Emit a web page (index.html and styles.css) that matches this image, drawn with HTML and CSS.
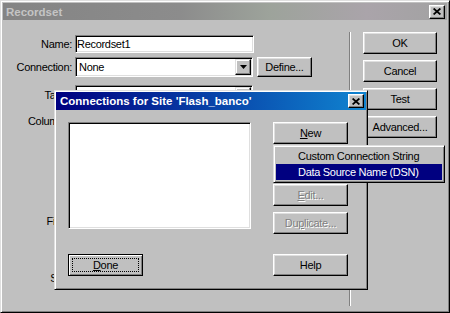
FILE: index.html
```html
<!DOCTYPE html>
<html>

<head>
    <meta charset="UTF-8">
    <meta name="viewport" content="width=device-width, initial-scale=1.0">
    <title>Recordset</title>
    <link rel="stylesheet" href="styles.css">
</head>

<body>
    <div class="window">
        <div class="titlebar inactive">
            <span class="caption">Recordset</span>
            <span class="close-btn">
                <svg width="8" height="7" viewBox="0 0 8 7"><path d="M0.6 0.5 L7.4 6.5 M7.4 0.5 L0.6 6.5" stroke="#000" stroke-width="1.7" fill="none"/></svg>
            </span>
        </div>
        <div class="window-body">
            <div class="form">
                <div class="row row-name">
                    <label>Name:</label>
                    <div class="textbox">Recordset1</div>
                </div>
                <div class="row row-conn">
                    <label>Connection:</label>
                    <div class="select">
                        <span class="select-value">None</span>
                        <span class="select-arrow"><svg width="7" height="4" viewBox="0 0 7 4"><path d="M0 0h7L3.5 4z"/></svg></span>
                    </div>
                    <button class="btn btn-define">Define...</button>
                </div>
                <div class="row row-table">
                    <label>Table:</label>
                    <div class="select">
                        <span class="select-value"></span>
                        <span class="select-arrow"><svg width="7" height="4" viewBox="0 0 7 4"><path d="M0 0h7L3.5 4z"/></svg></span>
                    </div>
                </div>
                <div class="row row-columns">
                    <label>Columns:</label>
                    <div class="columns-box">
                        <div class="radio-line"><span class="radio checked"></span>All</div>
                        <div class="radio-line"><span class="radio"></span>Selected:</div>
                        <div class="listbox small"></div>
                    </div>
                </div>
                <div class="row row-filter">
                    <label>Filter:</label>
                    <div class="select short"><span class="select-value">None</span><span class="select-arrow"><svg width="7" height="4" viewBox="0 0 7 4"><path d="M0 0h7L3.5 4z"/></svg></span></div>
                    <div class="select short"><span class="select-value">=</span><span class="select-arrow"><svg width="7" height="4" viewBox="0 0 7 4"><path d="M0 0h7L3.5 4z"/></svg></span></div>
                </div>
                <div class="row row-param">
                    <label></label>
                    <div class="select short"><span class="select-value">URL Parameter</span><span class="select-arrow"><svg width="7" height="4" viewBox="0 0 7 4"><path d="M0 0h7L3.5 4z"/></svg></span></div>
                    <div class="textbox short"></div>
                </div>
                <div class="row row-sort">
                    <label>Sort:</label>
                    <div class="select short"><span class="select-value">None</span><span class="select-arrow"><svg width="7" height="4" viewBox="0 0 7 4"><path d="M0 0h7L3.5 4z"/></svg></span></div>
                    <div class="select short"><span class="select-value">Ascending</span><span class="select-arrow"><svg width="7" height="4" viewBox="0 0 7 4"><path d="M0 0h7L3.5 4z"/></svg></span></div>
                </div>
            </div>
            <div class="separator"></div>
            <div class="side-buttons">
                <button class="btn">OK</button>
                <button class="btn">Cancel</button>
                <button class="btn">Test</button>
                <button class="btn">Advanced...</button>
            </div>
        </div>

        <!-- connections dialog opened over the recordset window -->
        <div class="dialog">
            <div class="titlebar active">
                <span class="caption">Connections for Site 'Flash_banco'</span>
                <span class="close-btn">
                    <svg width="8" height="7" viewBox="0 0 8 7"><path d="M0.6 0.5 L7.4 6.5 M7.4 0.5 L0.6 6.5" stroke="#000" stroke-width="1.7" fill="none"/></svg>
                </span>
            </div>
            <div class="dialog-body">
                <div class="dialog-left">
                    <div class="listbox"></div>
                    <button class="btn btn-wide default"><span class="focus-ring"><u>D</u>one</span></button>
                </div>
                <div class="dialog-right">
                    <button class="btn btn-wide"><u>N</u>ew</button>
                    <button class="btn btn-wide btn-edit" disabled><u>E</u>dit...</button>
                    <button class="btn btn-wide btn-dup" disabled>Du<u>p</u>licate...</button>
                    <button class="btn btn-wide btn-help">Help</button>
                </div>
            </div>
        </div>

        <!-- menu of the New button -->
        <div class="popup-menu">
            <div class="menu-item">Custom Connection String</div>
            <div class="menu-item selected">Data Source Name (DSN)</div>
        </div>
    </div>
</body>

</html>
```

FILE: styles.css
```css
body {
    margin: 0;
    font-family: "Liberation Sans", Arial, sans-serif;
    font-size: 11px;
    letter-spacing: -0.3px;
    color: #000;
    background: #c0c0c0;
}

/* window frame */
.window {
    position: relative;
    width: 450px;
    height: 313px;
    box-sizing: border-box;
    padding: 2px;
    background: #c0c0c0;
    border: 1px solid;
    border-color: #dfdfdf #000 #000 #dfdfdf;
    box-shadow: inset 1px 1px #fff, inset -1px -1px #808080;
    display: flex;
    flex-direction: column;
}

.titlebar {
    display: flex;
    align-items: center;
    justify-content: space-between;
    height: 17px;
    padding: 0 2px 0 3px;
    font-weight: bold;
    font-size: 11.5px;
    letter-spacing: 0;
    flex-shrink: 0;
}

.titlebar.inactive {
    background: linear-gradient(90deg, #848484, #8c8c8c 40%, #9da39b 60%, #aaa4aa 82%, #a2a2a2);
    color: #c4c4c4;
}

.titlebar.active {
    height: 18px;
    padding-left: 4px;
    background: linear-gradient(90deg, #000080, #1084d0);
    color: #fff;
}

.close-btn {
    width: 16px;
    height: 14px;
    box-sizing: border-box;
    background: #c0c0c0;
    border: 1px solid;
    border-color: #fff #000 #000 #fff;
    box-shadow: inset -1px -1px #808080, inset 1px 1px #dfdfdf;
    display: flex;
    align-items: center;
    justify-content: center;
}

.window-body {
    flex: 1;
    display: flex;
    padding: 12px 10px 4px 0;
}

/* form on the left */
.form {
    width: 346px;
    flex-shrink: 0;
    padding-top: 3px;
}

.row {
    display: flex;
    align-items: center;
}

.row label {
    width: 69px;
    margin-right: 3px;
    text-align: right;
    flex-shrink: 0;
}

.row-name {
    height: 18px;
}

.row-conn {
    height: 20px;
    margin-top: 4px;
}

.row-table {
    height: 20px;
    margin-top: 8px;
}

.row-columns {
    height: 92px;
    margin-top: 7px;
    align-items: flex-start;
}

.row-columns label {
    line-height: 18px;
}

.row-filter {
    height: 18px;
    margin-top: 8px;
}

.row-param {
    height: 18px;
    margin-top: 6px;
}

.row-sort {
    height: 18px;
    margin-top: 15px;
}

.row-filter .select,
.row-param .select,
.row-sort .select,
.row-param .textbox {
    height: 18px;
    margin-right: 4px;
}

.textbox {
    width: 179px;
    height: 18px;
    box-sizing: border-box;
    padding: 1px 1px 1px 1px;
    line-height: 14px;
    background: #fff;
    border: 1px solid;
    border-color: #808080 #fff #fff #808080;
    box-shadow: inset 1px 1px #000, inset -1px -1px #dfdfdf;
}

.select {
    display: flex;
    width: 178px;
    height: 20px;
    box-sizing: border-box;
    padding: 1px;
    background: #fff;
    border: 1px solid;
    border-color: #808080 #fff #fff #808080;
    box-shadow: inset 1px 1px #000, inset -1px -1px #dfdfdf;
}

.select.short,
.textbox.short {
    width: 120px;
}

.select-value {
    flex: 1;
    padding-left: 2px;
    line-height: 16px;
    white-space: nowrap;
    overflow: hidden;
}

.select-arrow {
    width: 16px;
    height: 100%;
    box-sizing: border-box;
    background: #c0c0c0;
    border: 1px solid;
    border-color: #dfdfdf #000 #000 #dfdfdf;
    box-shadow: inset -1px -1px #808080, inset 1px 1px #fff;
    display: flex;
    align-items: center;
    justify-content: center;
}

.columns-box {
    display: flex;
    flex-direction: column;
    gap: 2px;
}

.radio-line {
    display: flex;
    align-items: center;
    height: 16px;
}

.radio {
    width: 10px;
    height: 10px;
    margin-right: 4px;
    border-radius: 50%;
    background: #fff;
    border: 1px solid #808080;
}

.listbox {
    width: 183px;
    height: 107px;
    box-sizing: border-box;
    background: #fff;
    border: 1px solid;
    border-color: #808080 #fff #fff #808080;
    box-shadow: inset 1px 1px #000, inset -1px -1px #dfdfdf;
}

.listbox.small {
    width: 250px;
    height: 54px;
}

.separator {
    width: 0;
    border-left: 1px solid #808080;
    border-right: 1px solid #fff;
    margin-right: 12px;
}

.side-buttons {
    display: flex;
    flex-direction: column;
    gap: 6px;
}

/* buttons */
.btn {
    font: inherit;
    letter-spacing: inherit;
    color: #000;
    width: 74px;
    height: 22px;
    padding: 0;
    box-sizing: border-box;
    background: #c0c0c0;
    border: 1px solid;
    border-color: #fff #000 #000 #fff;
    box-shadow: inset -1px -1px #808080, inset 1px 1px #dfdfdf;
}

.btn u {
    text-decoration: underline;
}

.btn-define {
    width: 55px;
    height: 20px;
    margin-left: 4px;
}

.btn-wide {
    width: 75px;
}

.btn:disabled {
    color: #808080;
    text-shadow: 1px 1px 0 #fff;
}

.btn.default {
    border-color: #000;
    box-shadow: inset 1px 1px #fff, inset -1px -1px #808080;
    padding: 3px;
}

.focus-ring {
    display: flex;
    align-items: center;
    justify-content: center;
    height: 100%;
    box-sizing: border-box;
    border: 1px dotted #000;
}

/* connections dialog */
.dialog {
    position: absolute;
    left: 53px;
    top: 89px;
    width: 314px;
    height: 200px;
    box-sizing: border-box;
    padding: 1px;
    background: #c0c0c0;
    border: 1px solid;
    border-color: #dfdfdf #000 #000 #dfdfdf;
    box-shadow: inset 1px 1px #fff, inset -1px -1px #808080;
    display: flex;
    flex-direction: column;
}

.dialog-body {
    flex: 1;
    display: flex;
    gap: 22px;
    padding: 12px;
}

.dialog-left,
.dialog-right {
    display: flex;
    flex-direction: column;
}

.dialog-left .btn {
    margin-top: auto;
}

.btn-edit {
    margin-top: 40px;
}

.btn-dup {
    margin-top: 6px;
}

.btn-help {
    margin-top: auto;
}

/* drop down menu */
.popup-menu {
    position: absolute;
    left: 272px;
    top: 144px;
    width: 172px;
    box-sizing: border-box;
    padding: 2px;
    background: #c0c0c0;
    border: 1px solid;
    border-color: #dfdfdf #000 #000 #dfdfdf;
    box-shadow: inset 1px 1px #fff, inset -1px -1px #808080;
}

.menu-item {
    height: 16px;
    line-height: 16px;
    padding-left: 22px;
    white-space: nowrap;
}

.menu-item.selected {
    background: #000080;
    color: #fff;
}
```
